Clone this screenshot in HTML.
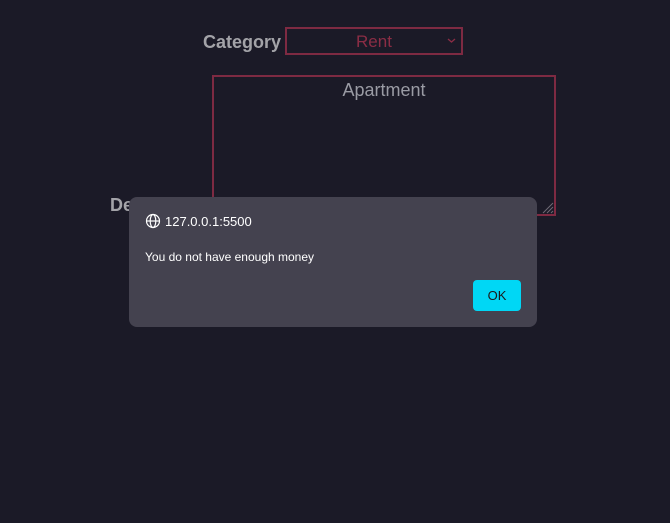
<!DOCTYPE html>
<html><head><style>
body{margin:0;width:670px;height:523px;background:#1b1a27;font-family:"Liberation Sans",sans-serif;position:relative;overflow:hidden}
.a{position:absolute}
</style></head><body>
<div class="a" style="left:203px;top:32px;font-size:18px;font-weight:bold;color:#a3a3a8">Category</div>
<div class="a" style="left:285px;top:27px;width:174px;height:24px;border:2px solid #7e2a42;color:#8b2d45;font-size:17px;text-align:center;line-height:25px">Rent</div>
<svg class="a" style="left:447px;top:37px" width="9" height="7"><path d="M1 2 L4.5 5 L8 2" stroke="#8b2d45" stroke-width="1.3" fill="none"/></svg>
<div class="a" style="left:212px;top:75px;width:340px;height:137px;border:2px solid #7e2a42"></div>
<div class="a" style="left:212px;top:80px;width:344px;text-align:center;font-size:18px;color:#9a9ba4">Apartment</div>
<svg class="a" style="left:540px;top:200px" width="14" height="14"><path d="M13 3 L3 13 M13 7 L7 13 M13 11 L11 13" stroke="#6e6a75" stroke-width="1"/></svg>
<div class="a" style="left:110px;top:195px;font-size:18px;font-weight:bold;color:#a3a3a8">De</div>
<div class="a" style="left:129px;top:197px;width:408px;height:130px;background:#44424f;border-radius:8px"></div>
<svg class="a" style="left:145px;top:213px" width="16" height="16" fill="none" stroke="#fff" stroke-width="1.2"><circle cx="8" cy="8" r="6.5"/><ellipse cx="8" cy="8" rx="2.8" ry="6.5"/><path d="M1.5 8 H14.5"/></svg>
<div class="a" style="left:165px;top:214px;font-size:13px;color:#fff">127.0.0.1:5500</div>
<div class="a" style="left:145px;top:250px;font-size:12px;color:#fff">You do not have enough money</div>
<div class="a" style="left:473px;top:280px;width:48px;height:31px;background:#00d7f5;border-radius:4px;font-size:13px;color:#1a1a1a;text-align:center;line-height:31px">OK</div>
</body></html>
